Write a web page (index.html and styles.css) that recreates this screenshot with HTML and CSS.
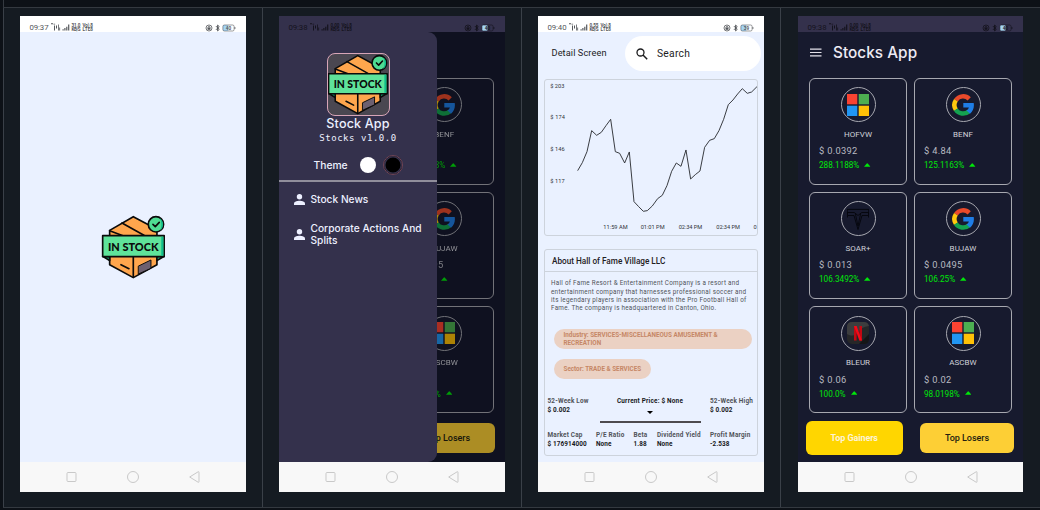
FILE: index.html
```html
<!DOCTYPE html>
<html lang="en">
<head>
<meta charset="utf-8">
<title>Stocks App screens</title>
<link rel="stylesheet" href="styles.css">
</head>
<body>
<svg class="defs" width="0" height="0" aria-hidden="true">
  <symbol id="signal" viewBox="0 0 46 11">
    <g fill="currentColor">
      <path d="M1 1.300h2v1H1zM3.500 1.700h1.600v.8H3.500zM4 3.500h1v5H4zM6 3.500h1v3H6zM8 2.500h.8v6H8zM9.300 5.500h.8v3h-.8z"/>
      <path d="M12.500 7.300h1.200v1.200h-1.200zM14.300 6.100h1.200v2.400h-1.200zM16.200 4.700h1.200v3.800h-1.200zM18.100 2.500h1.200v6h-1.200z"/>
    </g>
  </symbol>
  <symbol id="sysicons" viewBox="0 0 31 8">
    <g fill="none" stroke="currentColor" stroke-width=".8">
      <circle cx="4" cy="4" r="3"/>
      <path d="M3.100 4v-.8a.9.9 0 0 1 1.800 0V4"/>
      <path d="M11 2.200l3.200 3.200-1.600 1.500V1.100l1.600 1.500L11 5.800" stroke-width="1"/>
    </g>
    <rect x="2.500" y="3.600" width="3" height="2.200" fill="currentColor"/>
    <rect class="charge" x="17.900" y="1" width="5.600" height="6" rx="1"/>
    <rect x="17.900" y="1" width="11.200" height="6" rx="1.500" fill="none" stroke="currentColor" stroke-width=".6"/>
    <path d="M29.900 3v2" stroke="currentColor" stroke-width=".8"/>
  </symbol>
  <symbol id="navkeys" viewBox="0 0 226 30">
    <g fill="none" stroke="#c9c9c9" stroke-width="1">
      <rect x="47" y="10.500" width="9" height="9" rx="1"/>
      <circle cx="113" cy="15" r="5.500"/>
      <path d="M169.700 15l8.400-5.200q.9-.4.9.6v9.200q0 1-.9.600z"/>
    </g>
  </symbol>
  <symbol id="box" viewBox="62 46 194 192">
    <g stroke="#0b0b0b" stroke-width="5" stroke-linejoin="round" stroke-linecap="round">
      <path fill="#ffa64d" d="M159 51l71 38v106l-71 39-71-39V92z"/>
      <path fill="none" d="M125 70l66 37M88 93l40 15M159 172v60"/>
      <path fill="#12a878" d="M67 170l21 13v-13zM252 170l-22 13v-13z"/>
      <path fill="#6d6070" stroke-width="3" d="M175 199l37-18v25l-37 17z"/>
      <path d="M122 195l24 12"/>
      <path fill="#5fe39a" d="M67 108h185v63H67z"/>
      <circle cx="227" cy="74" r="23" fill="#4fdc93"/>
      <path fill="none" d="M218 74l7 7 12-13"/>
    </g>
    <path fill="#0fbd8b" d="M243 111h6v57h-6zM239 56a23 23 0 0 1 0 37q9-18 0-37z"/>
  </symbol>
  <symbol id="google" viewBox="0 0 22 22">
    <g fill="none" stroke-width="4.500">
      <path stroke="#e94a2b" d="M3.900 6.200A8.600 8.600 0 0 1 17.200 4.900"/>
      <path stroke="#ffc90e" d="M3.900 15.800A8.600 8.600 0 0 1 3.900 6.200"/>
      <path stroke="#14a350" d="M16.700 17.500A8.600 8.600 0 0 1 3.800 15.600"/>
    </g>
    <path fill="#1f7de6" d="M11.300 9h10.400c.8 4.500-.7 8.300-3.700 10.700l-3.500-3.100c1.200-.8 2-1.800 2.400-3.100h-5.600z"/>
  </symbol>
  <symbol id="microsoft" viewBox="0 0 22 22">
    <path fill="#fa4332" d="M0 0h10.300v10.300H0z"/><path fill="#4dae51" d="M11.700 0H22v10.300H11.700z"/>
    <path fill="#2196f3" d="M0 11.700h10.300V22H0z"/><path fill="#ffc107" d="M11.700 11.700H22V22H11.700z"/>
  </symbol>
  <symbol id="tesla" viewBox="0 0 22 22">
    <path fill="none" stroke="#05060c" stroke-width=".9" d="M0 1.400h22M.3 2v3.500M21.700 2v3.500M.5 4.500h6.800L11 7.500l3.700-3h6.800M.5 4.500v5M21.500 4.500v5M1 7.500h6L11 21.500 15 7.500h6M8.300 5.300L11 18l2.700-12.700"/>
  </symbol>
  <symbol id="netflix" viewBox="0 0 22 22">
    <rect width="22" height="22" rx="5" fill="#262728"/>
    <path fill="#3c3d3e" d="M5 0h12q4 0 5 4-8 1-11 6T2 13L0 12V5q0-5 5-5z"/>
    <path fill="#151617" d="M22 12v5q0 5-5 5h-5z"/>
    <path fill="#c30812" d="M7 4h2.600v14.500H7zM12.400 4H15v14.500h-2.600z"/><path fill="#f50a18" d="M7 4h2.600L15 18.500h-2.600z"/>
  </symbol>
  <symbol id="up" viewBox="0 0 7 4"><path fill="currentColor" d="M0 4L3 .3Q3.500 0 4 .3L7 4z"/></symbol>
  <symbol id="person" viewBox="0 0 11 11"><circle cx="5.500" cy="2.800" r="2.700" fill="currentColor"/><path fill="currentColor" d="M0 11V9.500C0 7.500 3.500 6.700 5.500 6.700S11 7.500 11 9.500V11z"/></symbol>
</svg>

<main class="board">
  <div class="strip"></div>
  <div class="cells">

    <section class="cell">
      <div class="phone light">
        <div class="status"><span class="clock">09:37</span>
          <svg class="signal" viewBox="0 0 46 11"><use href="#signal" width="46" height="11"/><text x="21.500" y="5.200" textLength="9">31.0</text><text x="21.500" y="9.300" textLength="9">KB/S</text><text x="32.500" y="5.200" textLength="10.500">Vo) 8</text><text x="32.500" y="9.300" textLength="10.500">LTE8</text></svg>
          <svg class="sys" viewBox="0 0 31 8"><use href="#sysicons" width="31" height="8"/><text x="20.700" y="6" textLength="5.500">40</text></svg></div>
        <div class="screen splash"><svg class="splash-logo" viewBox="62 46 194 192"><use href="#box" x="62" y="46" width="194" height="192"/><text class="box-text" x="83" y="153" textLength="152" lengthAdjust="spacingAndGlyphs">IN STOCK</text></svg></div>
        <svg class="nav"><use href="#navkeys"/></svg>
      </div>
    </section>

    <section class="cell">
      <div class="phone dark">
        <div class="status"><span class="clock">09:38</span>
          <svg class="signal" viewBox="0 0 46 11"><use href="#signal" width="46" height="11"/><text x="21.500" y="5.200" textLength="9">0.00</text><text x="21.500" y="9.300" textLength="9">KB/S</text><text x="32.500" y="5.200" textLength="10.500">Vo) 8</text><text x="32.500" y="9.300" textLength="10.500">LTE8</text></svg>
          <svg class="sys" viewBox="0 0 31 8"><use href="#sysicons" width="31" height="8"/><text x="20.700" y="6" textLength="5.500">40</text></svg></div>
        <div class="screen with-drawer">
          <aside class="drawer">
            <div class="brand">
              <div class="brand-icon"><svg viewBox="62 46 194 192"><use href="#box" x="62" y="46" width="194" height="192"/><text class="box-text" x="83" y="153" textLength="152" lengthAdjust="spacingAndGlyphs">IN STOCK</text></svg></div>
              <div class="brand-name">Stock App</div>
              <div class="brand-version">Stocks v1.0.0</div>
              <div class="theme"><span>Theme</span><i class="dot white"></i><i class="dot black"></i></div>
            </div>
            <div class="menu">
              <div class="item"><svg><use href="#person"/></svg><span>Stock News</span></div>
              <div class="item tall"><svg><use href="#person"/></svg><span>Corporate Actions And<br>Splits</span></div>
            </div>
          </aside>
          <div class="behind">
            <div class="behind-cards">
              <article class="card"><div class="logo"><svg><use href="#google"/></svg></div><h3>BENF</h3><p class="price">$ 4.84</p><p class="pct">125.1163%<svg><use href="#up"/></svg></p></article>
              <article class="card"><div class="logo"><svg><use href="#google"/></svg></div><h3>BUJAW</h3><p class="price">$ 0.0495</p><p class="pct">106.25%<svg><use href="#up"/></svg></p></article>
              <article class="card"><div class="logo"><svg><use href="#microsoft"/></svg></div><h3>ASCBW</h3><p class="price">$ 0.02</p><p class="pct">98.0198%<svg><use href="#up"/></svg></p></article>
            </div>
            <div class="behind-action"><div class="btn losers">Top Losers</div></div>
          </div>
        </div>
        <svg class="nav"><use href="#navkeys"/></svg>
      </div>
    </section>

    <section class="cell">
      <div class="phone light">
        <div class="status"><span class="clock">09:40</span>
          <svg class="signal" viewBox="0 0 46 11"><use href="#signal" width="46" height="11"/><text x="21.500" y="5.200" textLength="9">0.55</text><text x="21.500" y="9.300" textLength="9">KB/S</text><text x="32.500" y="5.200" textLength="10.500">Vo) 8</text><text x="32.500" y="9.300" textLength="10.500">LTE8</text></svg>
          <svg class="sys" viewBox="0 0 31 8"><use href="#sysicons" width="31" height="8"/><text x="20.700" y="6" textLength="5.500">39</text></svg></div>
        <div class="screen detail">
          <header class="detail-head">
            <h1>Detail Screen</h1>
            <div class="search">
              <svg viewBox="0 0 12 12"><circle cx="4.500" cy="4.500" r="3.500" fill="none" stroke="#1c1c1e" stroke-width="1.300"/><path d="M7 7l4.200 4.200" stroke="#1c1c1e" stroke-width="1.500"/></svg>
              <span>Search</span>
            </div>
          </header>
          <div class="chart">
            <svg viewBox="43 28 640 469">
              <polyline points="144,303 158,279 172,246 186,183 201,197 215,188 229,168 243,149 257,246 270,251 285,280 299,247 313,396 327,411 341,425 353,423 368,409 384,387 398,377 412,348 426,305 440,280 454,290 469,241 483,328 497,315 511,304 525,233 540,212 554,207 568,183 582,149 596,105 610,91 624,73 638,57 653,71 666,67 682,51"/>
              <g class="axis">
                <text x="62" y="55" textLength="42">$ 203</text><text x="62" y="149" textLength="44">$ 174</text><text x="62" y="244" textLength="43">$ 146</text><text x="62" y="339" textLength="43">$ 117</text>
                <text x="221" y="479" textLength="73">11:59 AM</text><text x="333" y="479" textLength="72">01:01 PM</text><text x="447" y="479" textLength="71">02:34 PM</text><text x="560" y="479" textLength="71">02:34 PM</text><text x="672" y="479">0</text>
              </g>
            </svg>
          </div>
          <div class="about">
            <h2>About Hall of Fame Village LLC</h2>
            <p class="desc"><span>Hall of Fame Resort &amp; Entertainment Company is a resort and</span><span>entertainment company that harnesses professional soccer and</span><span>its legendary players in association with the Pro Football Hall of</span><span>Fame. The company is headquartered in Canton, Ohio.</span></p>
            <div class="chip industry">Industry: SERVICES-MISCELLANEOUS AMUSEMENT &amp;<br>RECREATION</div>
            <div class="chip sector">Sector: TRADE &amp; SERVICES</div>
            <div class="range">
              <div class="stat low"><b>52-Week Low</b><strong>$ 0.002</strong></div>
              <div class="gauge"><strong>Current Price: $ None</strong><svg class="down" viewBox="0 0 6 3"><path d="M0 0h6L3 3z"/></svg><div class="bar"></div></div>
              <div class="stat high"><b>52-Week High</b><strong>$ 0.002</strong></div>
            </div>
            <div class="stats">
              <div class="stat"><b>Market Cap</b><strong>$ 176914000</strong></div>
              <div class="stat"><b>P/E Ratio</b><strong>None</strong></div>
              <div class="stat"><b>Beta</b><strong>1.88</strong></div>
              <div class="stat"><b>Dividend Yield</b><strong>None</strong></div>
              <div class="stat"><b>Profit Margin</b><strong>-2.538</strong></div>
            </div>
          </div>
        </div>
        <svg class="nav"><use href="#navkeys"/></svg>
      </div>
    </section>

    <section class="cell last">
      <div class="phone dark">
        <div class="status"><span class="clock">09:38</span>
          <svg class="signal" viewBox="0 0 46 11"><use href="#signal" width="46" height="11"/><text x="21.500" y="5.200" textLength="9">0.00</text><text x="21.500" y="9.300" textLength="9">KB/S</text><text x="32.500" y="5.200" textLength="10.500">Vo) 8</text><text x="32.500" y="9.300" textLength="10.500">LTE8</text></svg>
          <svg class="sys" viewBox="0 0 31 8"><use href="#sysicons" width="31" height="8"/><text x="20.700" y="6" textLength="5.500">40</text></svg></div>
        <div class="screen home">
          <header class="home-head"><svg class="burger" viewBox="0 0 12 9"><path d="M0 1h12M0 4.500h12M0 8h12" stroke="#e4e1ea" stroke-width="1.300"/></svg><h1>Stocks App</h1></header>
          <div class="cards">
            <article class="card"><div class="logo"><svg><use href="#microsoft"/></svg></div><h3>HOFVW</h3><p class="price">$ 0.0392</p><p class="pct">288.1188%<svg><use href="#up"/></svg></p></article>
            <article class="card"><div class="logo"><svg><use href="#google"/></svg></div><h3>BENF</h3><p class="price">$ 4.84</p><p class="pct">125.1163%<svg><use href="#up"/></svg></p></article>
            <article class="card"><div class="logo"><svg><use href="#tesla"/></svg></div><h3>SOAR+</h3><p class="price">$ 0.013</p><p class="pct">106.3492%<svg><use href="#up"/></svg></p></article>
            <article class="card"><div class="logo"><svg><use href="#google"/></svg></div><h3>BUJAW</h3><p class="price">$ 0.0495</p><p class="pct">106.25%<svg><use href="#up"/></svg></p></article>
            <article class="card"><div class="logo"><svg><use href="#netflix"/></svg></div><h3>BLEUR</h3><p class="price">$ 0.06</p><p class="pct">100.0%<svg><use href="#up"/></svg></p></article>
            <article class="card"><div class="logo"><svg><use href="#microsoft"/></svg></div><h3>ASCBW</h3><p class="price">$ 0.02</p><p class="pct">98.0198%<svg><use href="#up"/></svg></p></article>
          </div>
          <div class="actions"><div class="btn gainers">Top Gainers</div><div class="btn losers">Top Losers</div></div>
        </div>
        <svg class="nav"><use href="#navkeys"/></svg>
      </div>
    </section>

  </div>
</main>
</body>
</html>
```

FILE: styles.css
```css
* { box-sizing: border-box; }
body { margin: 0; width: 1040px; height: 510px; overflow: hidden; background: #0d1117; font-family: Roboto, "Liberation Sans", sans-serif; }
h1, h2, h3, p { margin: 0; font-weight: 400; }
svg { display: block; flex: none; }
.defs { position: absolute; }

/* table frame */
.board { padding-left: 3px; }
.strip { height: 8px; border: solid #343940; border-width: 0 0 1px 1px; }
.cells { display: grid; grid-template-columns: 259px 259px 259px 260px; height: 500px; background: #151b22; border-bottom: 1px solid #343940; }
.cell { border-left: 1px solid #3a4048; padding: 8px 0 0 16px; }
.cell.last { padding-left: 17px; }

.phone { width: 226px; height: 476px; display: flex; flex-direction: column; overflow: hidden; }
.last .phone { width: 225px; }
.light { background: #eaf1ff; }
.dark { background: #171a2e; }
.status { height: 16px; flex: none; display: flex; align-items: center; padding: 6px 10px 0 9.500px; background: #fff; color: #55585c; }
.status text { font-size: 4.600px; font-weight: 700; fill: currentColor; }
.dark .status { background: #34314c; color: #14131d; }
.clock { font-size: 7.800px; line-height: 9px; width: 20.500px; padding-top: 1px; letter-spacing: -.1px; }
.signal { width: 46px; height: 11px; }
.sys { width: 31px; height: 8px; margin: 1px 0 0 auto; }
.charge { fill: #a5d5f5; }
.dark .charge { fill: #386da0; }
.nav { width: 226px; height: 30px; background: #f8f8f8; }
.screen { height: 430px; flex: none; }

/* splash */
.splash { display: flex; justify-content: center; align-items: center; }
.splash-logo { width: 64.600px; height: 64px; }
.box-text { font: 900 36px Lato, sans-serif; fill: #0b0b0b; }

/* drawer */
.with-drawer { display: flex; background: #0f1120; }
.drawer { position: relative; z-index: 1; width: 158px; height: 429.500px; flex: none; background: #34314c; border-radius: 0 9px 9px 0; color: #edf0ff; font-family: Inter, sans-serif; }
.brand { height: 150px; display: flex; flex-direction: column; align-items: center; padding-top: 21px; border-bottom: 2px solid #908e9b; }
.brand-icon { width: 63px; height: 63px; border: 1px solid #d7a5b7; border-radius: 8px; background: #4a4751; overflow: hidden; display: flex; align-items: center; justify-content: center; }
.brand-icon svg { width: 61.500px; height: 61px; }
.brand-name { font-size: 12.600px; font-weight: 500; line-height: 16px; letter-spacing: .15px; white-space: nowrap; }
.brand-version { font: 9px/12px "DejaVu Sans Mono", monospace; letter-spacing: .54px; }
.theme { display: flex; align-items: center; height: 20px; margin-top: 11px; }
.theme span { font-size: 10.300px; font-weight: 500; width: 46px; }
.dot { width: 16px; height: 16px; border-radius: 50%; background: #fff; }
.dot.black { width: 20px; height: 20px; margin-left: 7px; background: #000; border: 1px solid #714658; box-shadow: inset 0 0 0 1.500px #34314c; }
.menu { font-size: 10.200px; line-height: 12px; letter-spacing: 0; font-weight: 500; }
.item { display: flex; align-items: center; gap: 5.500px; padding-left: 15px; height: 34px; white-space: nowrap; }
.item.tall { height: 36px; }
.item svg { width: 11px; height: 11px; }
.behind { margin-left: -42px; width: 110px; flex: none; filter: brightness(.68); }
.behind-cards { display: grid; gap: 7.300px; padding-top: 45.500px; width: 98.500px; }
.behind-action { height: 49.500px; display: flex; align-items: center; padding-left: 6px; }

/* stock cards */
.home-head { height: 45.500px; display: flex; align-items: center; padding: 0 0 4px 12px; color: #eeebf4; }
.burger { width: 11.500px; height: 9px; }
.home-head h1 { font: 500 15.300px/20px Inter, sans-serif; letter-spacing: .05px; margin-left: 11.500px; }
.cards { display: grid; grid-template-columns: 98px 98px; gap: 7.300px 7px; padding-left: 11px; }
.card { height: 107px; border: 1px solid #a7a8b0; border-radius: 6px; padding: 8.500px 9px 0; color: #d0d1d9; }
.logo { width: 35px; height: 35px; margin: 0 auto 6.500px; border: 1px solid #a7a8b0; border-radius: 50%; display: flex; align-items: center; justify-content: center; }
.logo svg { width: 22px; height: 22px; }
.card h3 { font-size: 8px; line-height: 11px; text-align: center; letter-spacing: .05px; }
.price { font-size: 9.300px; line-height: 12px; margin-top: 5.500px; letter-spacing: .3px; color: #b9bac2; }
.pct { display: flex; align-items: center; gap: 5px; font-size: 8.200px; line-height: 12px; margin-top: 2px; color: #00e60a; }
.pct svg { width: 6.500px; height: 4px; margin-top: -1px; }
.actions { height: 49.500px; display: flex; align-items: center; gap: 17px; padding-left: 7.500px; }
.btn { display: flex; align-items: center; justify-content: center; font-size: 9px; font-weight: 500; border-radius: 6px; white-space: nowrap; }
.gainers { width: 97.500px; height: 34.500px; background: #ffd600; color: #fdf3d5; font-weight: 700; letter-spacing: -.1px; }
.losers { width: 94px; height: 30.500px; background: #fdcf35; color: #241d10; letter-spacing: -.05px; }

/* detail */
.detail-head { height: 47.400px; padding-top: 4px; display: flex; }
.detail-head h1 { font-size: 9.200px; line-height: 34px; width: 87px; padding-left: 13.500px; letter-spacing: .1px; color: #1c1c1e; white-space: nowrap; }
.search { width: 136px; height: 35px; border-radius: 18px; background: #fff; display: flex; align-items: center; padding-left: 11px; gap: 9px; font-size: 10.300px; letter-spacing: .25px; color: #1c1c1e; }
.search svg { width: 12px; height: 12px; }
.chart { width: 214px; height: 157px; margin-left: 6px; border: 1px solid #cdd3dc; border-radius: 3px; }
.chart svg { width: 213.300px; height: 156.300px; margin: -1px; }
.chart polyline { fill: none; stroke: #26282c; stroke-width: 2.700; }
.axis { font-size: 17px; fill: #303338; }
.about { width: 214px; height: 207px; margin: 12.500px 0 0 6px; border: 1px solid #cdd3dc; border-radius: 3px; color: #505359; }
.about h2 { height: 22.500px; line-height: 22px; padding-left: 7px; font-size: 8.200px; font-weight: 500; color: #1e2023; border-bottom: 1px solid #cdd3dc; }
.desc { padding: 7px 0 0 6px; font-size: 6.300px; line-height: 8.200px; white-space: nowrap; letter-spacing: .28px; height: 57px; }
.desc span { display: block; }
.chip { margin-left: 8.500px; padding-left: 10px; background: #ebd1c3; color: #c68766; border-radius: 10px; font-size: 6.300px; font-weight: 700; line-height: 7.600px; height: 20px; white-space: nowrap; display: flow-root; }
.industry { width: 198px; padding-top: 3px; }
.sector { width: 97.500px; margin-top: 10px; line-height: 20px; }
.range { display: flex; margin-top: 18px; height: 34px; }
.stat { display: flex; flex-direction: column; font-size: 6.400px; line-height: 8.700px; white-space: nowrap; }
.stat b { font-weight: 700; color: #505359; letter-spacing: .2px; }
.stat strong, .gauge strong { color: #18191c; letter-spacing: .1px; }
.low { width: 54.500px; padding-left: 2.500px; }
.gauge { width: 101px; display: flex; flex-direction: column; align-items: center; font-size: 6.400px; line-height: 8.700px; }
.gauge strong { letter-spacing: .2px; }
.down { width: 6px; height: 3px; margin-top: 5px; }
.bar { width: 101px; height: 2px; background: #4d4a4f; margin-top: 6.500px; }
.high { margin-left: 9.500px; }
.stats { display: grid; grid-template-columns: 48.500px 37.500px 23.500px 53px 45px; padding-left: 2.500px; }
```
